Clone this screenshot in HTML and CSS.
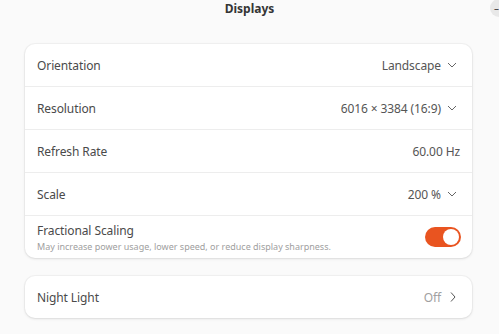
FILE: index.html
```html
<!DOCTYPE html>
<html lang="en">
<head>
  <meta charset="UTF-8"/>
  <title>Displays</title>
  <link rel="stylesheet" href="styles.css">
</head>
<body>
  <div class="header">
    <span class="title">Displays</span>
    <span class="win-btn">&ndash;</span>
  </div>

  <div class="content">
    <div class="card">
      <div class="row">
        <span class="label">Orientation</span>
        <span class="value">Landscape <svg class="chev" viewBox="0 0 10 10"><path d="M1 3 L5 7 L9 3"/></svg></span>
      </div>
      <div class="row">
        <span class="label">Resolution</span>
        <span class="value">6016 × 3384 (16:9) <svg class="chev" viewBox="0 0 10 10"><path d="M1 3 L5 7 L9 3"/></svg></span>
      </div>
      <div class="row">
        <span class="label">Refresh Rate</span>
        <span class="value">60.00 Hz</span>
      </div>
      <div class="row">
        <span class="label">Scale</span>
        <span class="value">200 % <svg class="chev" viewBox="0 0 10 10"><path d="M1 3 L5 7 L9 3"/></svg></span>
      </div>
      <div class="row">
        <div class="text">
          <span class="label">Fractional Scaling</span>
          <span class="sub">May increase power usage, lower speed, or reduce display sharpness.</span>
        </div>
        <label class="switch">
          <input type="checkbox" checked>
          <span class="slider"></span>
        </label>
      </div>
    </div>

    <div class="card">
      <div class="row">
        <span class="label">Night Light</span>
        <span class="value dim">Off <svg class="chev-r" viewBox="0 0 10 10"><path d="M3 0.5 L7 5 L3 9.5"/></svg></span>
      </div>
    </div>
  </div>
</body>
</html>
```

FILE: styles.css
```css
body {
  font-family: "Noto Sans", "Open Sans", sans-serif;
  margin: 0;
  background: #fafafa;
  color: #4a4a4a;
  width: 499px;
  height: 334px;
  overflow: hidden;
}

.header {
  position: relative;
  height: 20px;
  display: flex;
  justify-content: center;
  align-items: center;
}

.title {
  font-size: 12px;
  font-weight: bold;
  color: #353535;
  margin-top: -4px;
}

.win-btn {
  position: absolute;
  left: 490px;
  top: -1px;
  width: 18px;
  height: 18px;
  border-radius: 50%;
  background: #e8e8e8;
  font-size: 10px;
  line-height: 18px;
  color: #444;
  text-indent: 4px;
}

.content {
  padding: 24px 27px 0 25px;
  display: flex;
  flex-direction: column;
  gap: 18px;
}

.card {
  background: #fff;
  border-radius: 10px;
  box-shadow: 0 0 0 1px rgba(0,0,0,0.03), 0 1px 3px rgba(0,0,0,0.1);
}

.row {
  height: 42px;
  padding: 0 12px;
  display: flex;
  align-items: center;
  justify-content: space-between;
  border-top: 1px solid #ededed;
}

.row:first-child {
  border-top: none;
}

.label {
  font-size: 12px;
  color: #4a4a4a;
  letter-spacing: -0.1px;
}

.value {
  font-size: 12px;
  color: #555;
  display: flex;
  align-items: center;
  gap: 6px;
  letter-spacing: -0.1px;
}

.value.dim {
  color: #a0a0a0;
  gap: 7px;
}

.chev {
  width: 10px;
  height: 10px;
  fill: none;
  stroke: #666;
  stroke-width: 1;
  margin-right: 3px;
}

.chev-r {
  width: 10px;
  height: 10px;
  fill: none;
  stroke: #555;
  stroke-width: 1;
  margin-right: 2px;
}

.text {
  display: flex;
  flex-direction: column;
}

.sub {
  font-size: 9px;
  color: #a0a0a0;
  margin-top: 1px;
}

/* Toggle Switch */
.switch {
  position: relative;
  display: inline-block;
  width: 36px;
  height: 20px;
  margin-right: -1px;
}

.switch input {
  opacity: 0;
  width: 0;
  height: 0;
}

.slider {
  position: absolute;
  top: 0; left: 0; right: 0; bottom: 0;
  background-color: #ccc;
  border-radius: 20px;
}

.slider:before {
  position: absolute;
  content: "";
  height: 16px;
  width: 16px;
  left: 2px;
  top: 2px;
  background-color: white;
  border-radius: 50%;
}

input:checked + .slider {
  background-color: #e95420;
}

input:checked + .slider:before {
  transform: translateX(16px);
}
```
